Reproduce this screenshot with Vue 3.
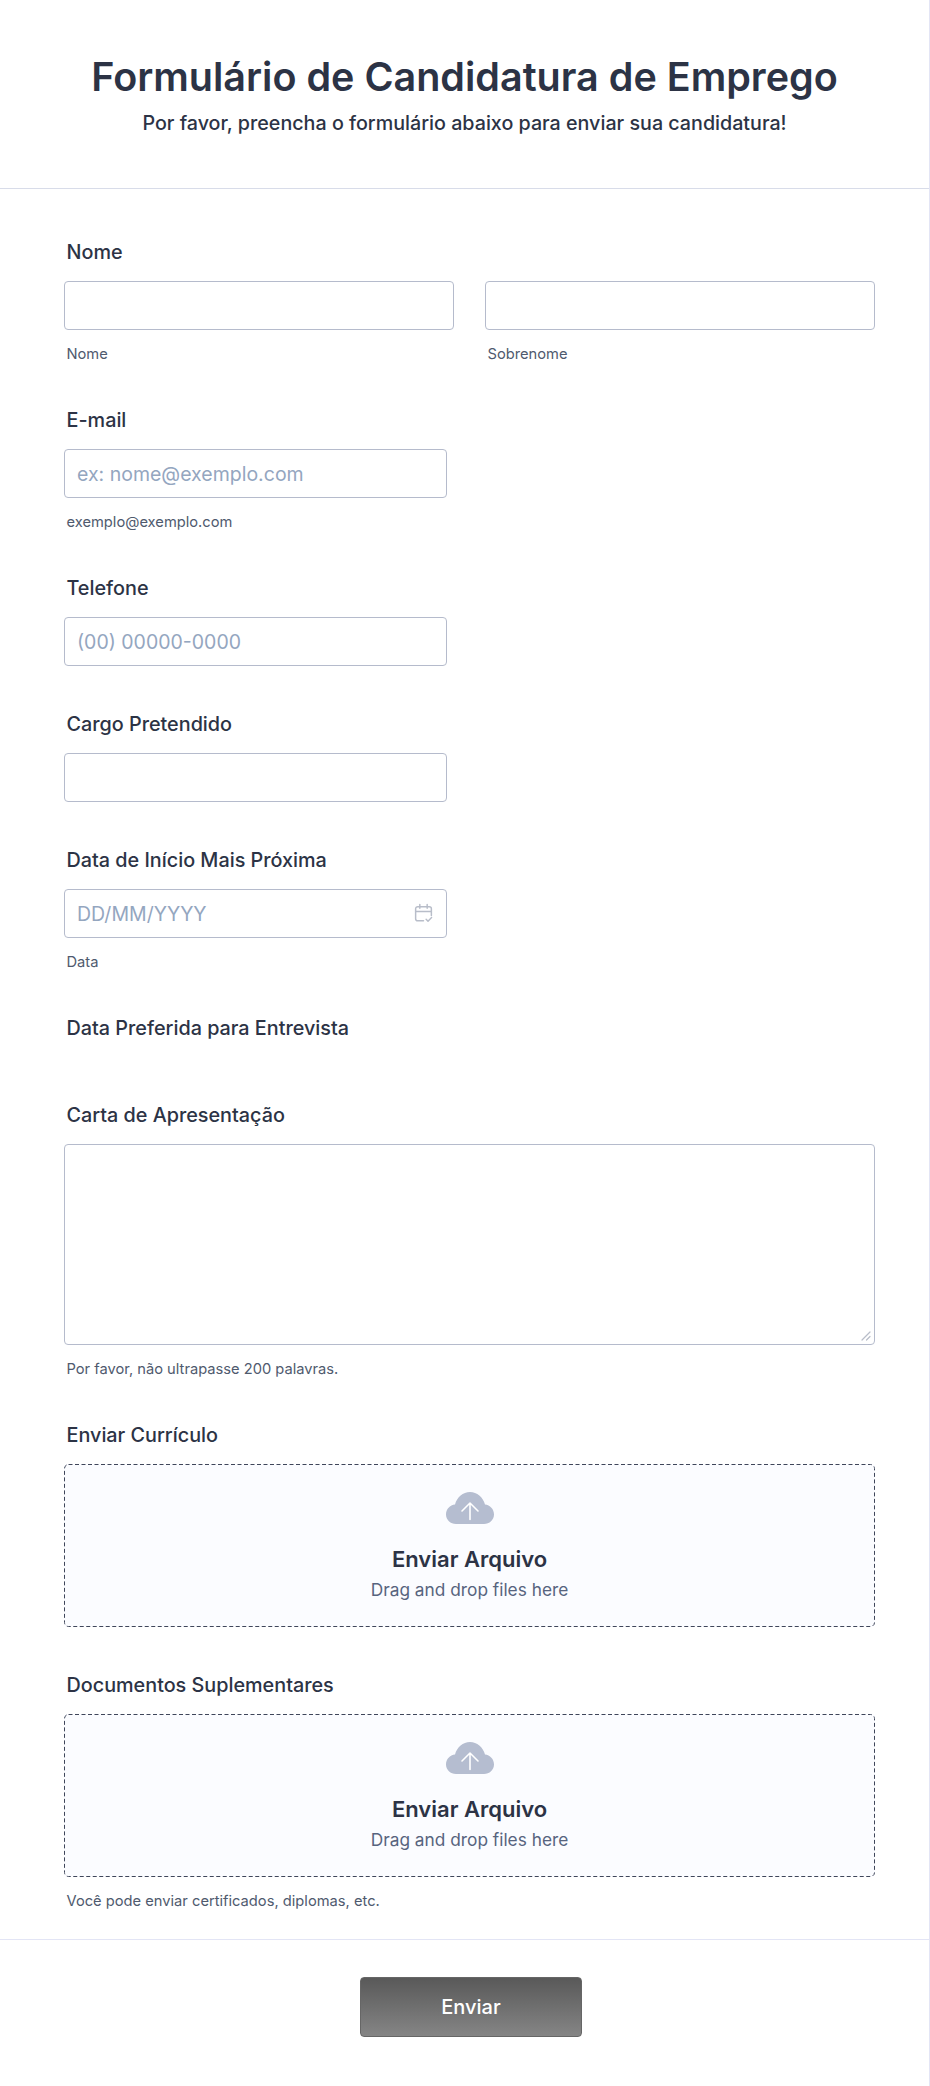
<script setup>
const uploads = [
  { label: 'Enviar Currículo' },
  { label: 'Documentos Suplementares', hint: 'Você pode enviar certificados, diplomas, etc.' },
]
</script>

<template>
  <main class="page">
    <header class="head">
      <h1>Formulário de Candidatura de Emprego</h1>
      <p>Por favor, preencha o formulário abaixo para enviar sua candidatura!</p>
    </header>

    <form class="form" @submit.prevent>
      <div class="field">
        <label class="label">Nome</label>
        <div class="two">
          <div>
            <input class="input" type="text" />
            <div class="sub">Nome</div>
          </div>
          <div>
            <input class="input" type="text" />
            <div class="sub">Sobrenome</div>
          </div>
        </div>
      </div>

      <div class="field">
        <label class="label">E-mail</label>
        <input class="input short" type="text" placeholder="ex: nome@exemplo.com" />
        <div class="sub">exemplo@exemplo.com</div>
      </div>

      <div class="field">
        <label class="label">Telefone</label>
        <input class="input short" type="text" placeholder="(00) 00000-0000" />
      </div>

      <div class="field">
        <label class="label">Cargo Pretendido</label>
        <input class="input short" type="text" />
      </div>

      <div class="field">
        <label class="label">Data de Início Mais Próxima</label>
        <div class="date short">
          <input class="input" type="text" placeholder="DD/MM/YYYY" />
          <svg class="cal" viewBox="0 0 20 20" fill="none" stroke="#b8bdc9" stroke-width="1.4" stroke-linecap="round" stroke-linejoin="round">
            <path d="M10 17H4.500A2 2 0 0 1 2.500 15V5.500a2 2 0 0 1 2-2h11a2 2 0 0 1 2 2V12" />
            <path d="M2.500 8h15M6.500 1.500v3.500M13.500 1.500v3.500" />
            <path d="M12.500 15.500l1.800 1.800 3.400-3.400" />
          </svg>
        </div>
        <div class="sub">Data</div>
      </div>

      <div class="field">
        <label class="label">Data Preferida para Entrevista</label>
      </div>

      <div class="field">
        <label class="label">Carta de Apresentação</label>
        <div class="area-wrap">
          <textarea class="area"></textarea>
          <svg class="grip" viewBox="0 0 10 10" fill="none" stroke="#b8bdc9" stroke-width="1.200" stroke-linecap="round">
            <path d="M1 9l8-8M5.500 9l3.500-3.500" />
          </svg>
        </div>
        <div class="sub">Por favor, não ultrapasse 200 palavras.</div>
      </div>

      <div v-for="u in uploads" :key="u.label" class="field">
        <label class="label">{{ u.label }}</label>
        <div class="drop">
          <svg class="dash" viewBox="0 0 811 163" fill="none">
            <rect x="0.500" y="0.500" width="810" height="162" rx="4" stroke="#3f465a" stroke-dasharray="4 2.500" />
          </svg>
          <svg class="cloud" viewBox="0 0 48 32">
            <path fill="#b5bdd0" d="M10 32C4.500 32 0 27.800 0 22.500 0 17 4 13 9 12.500 11 5 17 0 24 0s13 5 15 12.500c5 .5 9 4.500 9 10 0 5.300-4.500 9.500-10 9.500z" />
            <path fill="none" stroke="#fff" stroke-width="1.600" stroke-linecap="round" stroke-linejoin="round" d="M24 27.500V11M16 19l8-8 8 8" />
          </svg>
          <div class="drop-title">Enviar Arquivo</div>
          <div class="drop-text">Drag and drop files here</div>
        </div>
        <div v-if="u.hint" class="sub">{{ u.hint }}</div>
      </div>
    </form>

    <footer class="foot">
      <button class="send" type="button">Enviar</button>
    </footer>
  </main>
</template>

<style>
html, body { margin: 0; background: #fff; }
</style>

<style scoped>
.page {
  box-sizing: border-box;
  width: 930px;
  height: 2086px;
  background: #fff;
  border-right: 1px solid #e3e5f5;
  font-family: Inter, "Liberation Sans", sans-serif;
  color: #2c3345;
}
.head {
  box-sizing: border-box;
  height: 189px;
  padding-top: 52px;
  text-align: center;
  border-bottom: 1px solid #d8dce9;
}
.head h1 {
  margin: 0;
  font-size: 39.5px;
  line-height: 50px;
  font-weight: 600;
}
.head p {
  margin: 7px 0 0;
  font-size: 19.7px;
  line-height: 28px;
  font-weight: 500;
}
.form {
  box-sizing: border-box;
  height: 1751px;
  padding: 51px 54px 0 64px;
  border-bottom: 1px solid #e3e5f5;
  display: flex;
  flex-direction: column;
  gap: 46px;
}
.label {
  display: block;
  height: 24px;
  margin: 0 0 17px 2.5px;
  font-size: 19.8px;
  line-height: 24px;
  font-weight: 500;
}
.two {
  display: grid;
  grid-template-columns: 390px 390px;
  gap: 31px;
}
.input {
  display: block;
  box-sizing: border-box;
  width: 100%;
  height: 49px;
  padding: 0 12px;
  border: 1px solid #b5bbcc;
  border-radius: 4px;
  background: #fff;
  font-family: inherit;
  font-size: 19.5px;
  color: #2c3345;
  outline: none;
}
.short { width: 383px; }
.input::placeholder { color: #94a6bf; opacity: 1; }
.sub {
  height: 20px;
  margin: 14px 0 -2px 2.5px;
  font-size: 14.7px;
  line-height: 20px;
  color: #4f5a6e;
}
.date { position: relative; }
.cal {
  position: absolute;
  right: 13px;
  top: 14px;
  width: 21px;
  height: 21px;
}
.area-wrap { position: relative; width: 811px; }
.area {
  display: block;
  box-sizing: border-box;
  width: 811px;
  height: 201px;
  padding: 8px 12px;
  border: 1px solid #b5bbcc;
  border-radius: 4px;
  background: #fff;
  font-family: inherit;
  font-size: 18px;
  resize: none;
  outline: none;
}
.grip {
  position: absolute;
  right: 4px;
  bottom: 4px;
  width: 10px;
  height: 10px;
}
.drop {
  position: relative;
  box-sizing: border-box;
  width: 811px;
  height: 163px;
  padding-top: 28px;
  border-radius: 4px;
  background: #fbfcff;
  display: flex;
  flex-direction: column;
  align-items: center;
}
.dash {
  position: absolute;
  left: 0;
  top: 0;
  width: 811px;
  height: 163px;
}
.cloud {
  display: block;
  width: 48px;
  height: 32px;
}
.drop-title {
  margin-top: 21px;
  font-size: 22px;
  line-height: 28px;
  font-weight: 600;
}
.drop-text {
  margin-top: 5px;
  font-size: 17.3px;
  line-height: 24px;
  color: #57647e;
}
.foot {
  display: flex;
  justify-content: center;
  padding: 37px 53px 0 66px;
  box-sizing: border-box;
}
.send {
  box-sizing: border-box;
  width: 222px;
  height: 60px;
  border: 1px solid #666;
  border-radius: 4px;
  background: linear-gradient(180deg, #595959 0%, #858585 100%);
  color: #fff;
  font-family: inherit;
  font-size: 20px;
  font-weight: 500;
}
</style>
